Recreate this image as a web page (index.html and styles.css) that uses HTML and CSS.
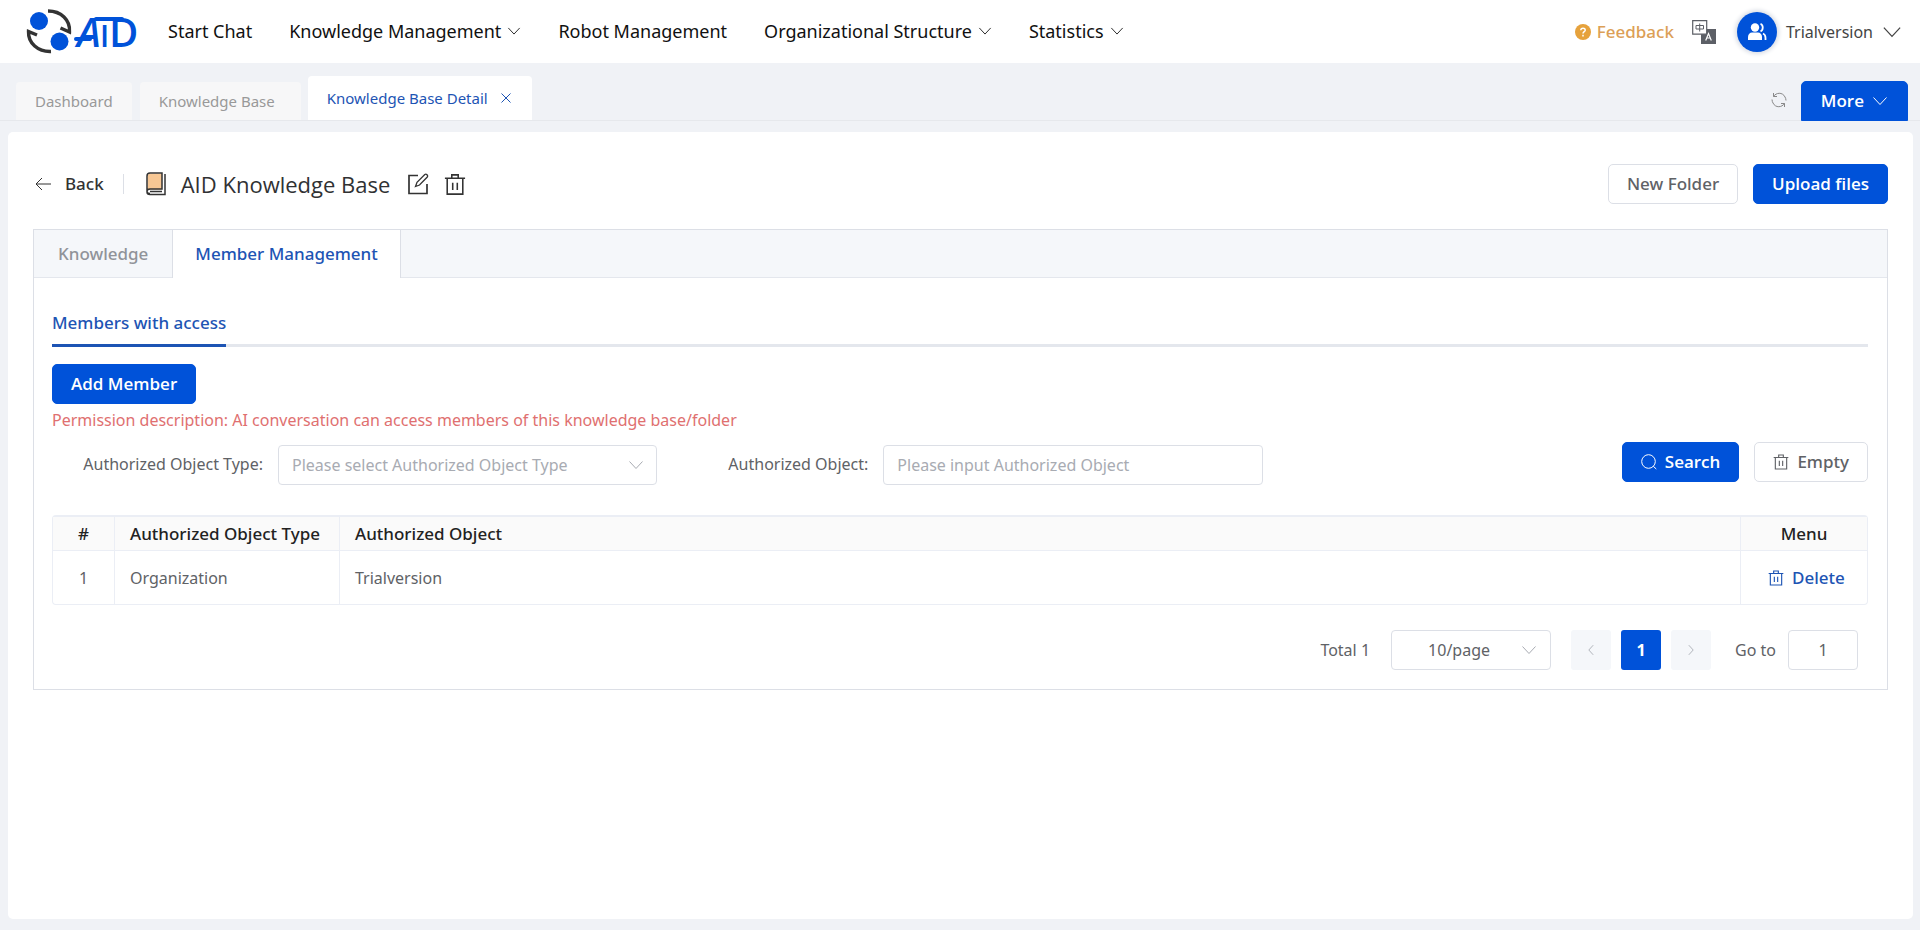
FILE: index.html
```html
<!DOCTYPE html>
<html lang="en">
<head>
<meta charset="utf-8">
<meta name="viewport" content="width=device-width, initial-scale=1">
<title>AID Knowledge Base</title>
<link rel="stylesheet" href="styles.css">
</head>
<body>
<svg class="sprite" aria-hidden="true">
  <symbol id="down" viewBox="0 0 16 16"><path d="M1.500 4.500 8 11.500l6.500-7" fill="none" stroke="currentColor"/></symbol>
  <symbol id="left" viewBox="0 0 16 16"><path d="M10.500 2.500 5.500 8l5 5.500" fill="none" stroke="currentColor"/></symbol>
  <symbol id="right" viewBox="0 0 16 16"><path d="M5.500 2.500l5 5.500-5 5.500" fill="none" stroke="currentColor"/></symbol>
  <symbol id="trash" viewBox="0 0 24 24"><path d="M1 5.200h22M8.500 5V1.500h7V5M3.500 5.500v17h17v-17M9.500 10v8M14.500 10v8" fill="none" stroke="currentColor" stroke-width="1.700"/></symbol>
</svg>
<header class="header">
  <a class="logo" href="#" aria-label="AID">
    <svg width="116" height="48" viewBox="0 0 116 48">
      <circle cx="14" cy="13" r="9" fill="#0052d9"/>
      <circle cx="34.500" cy="33.500" r="9" fill="#0052d9"/>
      <g fill="none" stroke="#333" stroke-width="3.400">
        <path d="M23 3C36 3 45.500 12 44.500 24L35.500 20"/>
        <path d="M26 43.500C13 44 3 35 3.500 23.500L12 27"/>
      </g>
      <text class="logo-text" y="39"><tspan x="52" class="slant">A</tspan><tspan x="75" class="small">I</tspan><tspan x="84">D</tspan></text>
      <path d="M51 31h14M71 11h26" fill="none" stroke="#0052d9" stroke-width="4" stroke-linecap="round"/>
    </svg>
  </a>
  <nav class="nav">
    <a href="#">Start Chat</a>
    <a href="#">Knowledge Management <svg class="i14"><use href="#down"/></svg></a>
    <a href="#">Robot Management</a>
    <a href="#">Organizational Structure <svg class="i14"><use href="#down"/></svg></a>
    <a href="#">Statistics <svg class="i14"><use href="#down"/></svg></a>
  </nav>
  <div class="account">
    <a class="feedback" href="#">
      <svg class="i16" viewBox="0 0 16 16"><circle cx="8" cy="8" r="8" fill="#e6a23c"/><path d="M5.800 6.300C5.800 3.400 10.300 3.500 10.200 6.200 10.200 7.700 8 7.700 8 9.500M8 10.800v1.700" fill="none" stroke="#fff" stroke-width="1.500"/></svg>
      Feedback
    </a>
    <button class="plain" aria-label="Switch language">
      <svg width="24" height="24" viewBox="0 0 24 24"><path d="M9 9h15v15H9z" fill="#5c5f66"/><path d="M.7.700h14v13.500H.7z" fill="#fff" stroke="#5c5f66" stroke-width="1.200"/><path d="M4 5.500h7.500v3.500H4zM7.700 3.500v8" fill="none" stroke="#5c5f66"/><path d="M13.700 20.500l2.800-7 2.800 7M14.800 18h3.500" fill="none" stroke="#fff" stroke-width="1.200"/></svg>
    </button>
    <button class="plain user">
      <span class="avatar"><svg width="20" height="20" viewBox="0 0 20 20"><circle cx="8" cy="5.500" r="4.200" fill="#fff"/><path d="M1 18v-3c0-3 2-4.500 4-4.500h6c2 0 4 1.500 4 4.500v3z" fill="#fff"/><path d="M13.500 1.800c3 1 3 6.500 0 7.500M16 11.500c1.600.8 2.500 2 2.500 4.200V18" fill="none" stroke="#fff" stroke-width="1.800"/></svg></span>
      Trialversion
      <svg class="i20"><use href="#down"/></svg>
    </button>
  </div>
</header>
<div class="tabbar">
  <a class="page-tab" href="#">Dashboard</a>
  <a class="page-tab wide" href="#">Knowledge Base</a>
  <a class="page-tab current" href="#">Knowledge Base Detail
    <svg class="i14" viewBox="0 0 14 14"><path d="M2.500 2.500l9 9M11.500 2.500l-9 9" stroke="currentColor"/></svg>
  </a>
  <button class="plain refresh" aria-label="Refresh"><svg class="i16" viewBox="0 0 16 16"><path d="M2.500 1v3.500H6M2.500 4.500C5 .5 11.500-.2 14 5 14.500 6 15 7 15 8.500M13.500 15v-3.500H10M13.500 11.500C11 15.500 4.500 16.200 2 11 1.500 10 1 9 1 7.500" fill="none" stroke="currentColor"/></svg></button>
  <button class="btn primary more">More <svg class="i16"><use href="#down"/></svg></button>
</div>
<main class="page">
  <div class="titlebar">
    <button class="plain back"><svg class="i16" viewBox="0 0 16 16"><path d="M7 2 1 8l6 6M1 8h15" fill="none" stroke="currentColor"/></svg>Back</button>
    <span class="divider"></span>
    <svg width="20" height="24" viewBox="0 0 20 24"><path d="M3.500 1.500H16v16H5L1.500 18V3.500z" fill="#f7c794"/><path d="M19 2v20.500H4C2 22.500 1 21.500 1 20V4C1 2 2 1 4 1h12v16H4c-4 0-4 4.500 0 4.500M4 19.500h12" fill="none" stroke="#333" stroke-width="1.500"/></svg>
    <h1>AID Knowledge Base</h1>
    <button class="plain" aria-label="Rename"><svg width="22" height="22" viewBox="0 0 22 22"><path d="M11 2.500H2v18h18V11" fill="none" stroke="#333" stroke-width="1.700"/><path d="M8.500 13.500 10 9.300 17.800 1.500c1.500-1 3.500 1 2.500 2.500L12.500 12z" fill="#fff" stroke="#333" stroke-width="1.300"/></svg></button>
    <button class="plain" aria-label="Delete knowledge base"><svg width="22" height="23"><use href="#trash"/></svg></button>
    <div class="actions">
      <button class="btn">New Folder</button>
      <button class="btn primary">Upload files</button>
    </div>
  </div>
  <section class="box">
    <div class="box-tabs">
      <button class="box-tab">Knowledge</button>
      <button class="box-tab selected">Member Management</button>
    </div>
    <div class="box-body">
      <div class="subtabs"><button class="subtab">Members with access</button></div>
      <button class="btn primary">Add Member</button>
      <p class="note">Permission description: AI conversation can access members of this knowledge base/folder</p>
      <form class="filters">
        <div class="field">
          <label for="type">Authorized Object Type:</label>
          <span class="select"><select id="type"><option>Please select Authorized Object Type</option></select><svg class="i16"><use href="#down"/></svg></span>
        </div>
        <div class="field">
          <label for="object">Authorized Object:</label>
          <input id="object" type="text" placeholder="Please input Authorized Object">
        </div>
        <div class="buttons">
          <button class="btn primary" type="button"><svg class="i16" viewBox="0 0 16 16"><circle cx="7.500" cy="7.500" r="6.800" fill="none" stroke="currentColor"/><path d="M12.300 12.300l3 2.700" stroke="currentColor"/></svg>Search</button>
          <button class="btn" type="reset"><svg class="i16"><use href="#trash"/></svg>Empty</button>
        </div>
      </form>
      <table class="members">
        <thead><tr><th class="num">#</th><th class="type">Authorized Object Type</th><th>Authorized Object</th><th class="menu">Menu</th></tr></thead>
        <tbody><tr><td class="num">1</td><td>Organization</td><td>Trialversion</td><td class="menu"><button class="plain delete"><svg class="i16"><use href="#trash"/></svg>Delete</button></td></tr></tbody>
      </table>
      <div class="pagination">
        <span>Total 1</span>
        <span class="select size"><select aria-label="Page size"><option>10/page</option></select><svg class="i16"><use href="#down"/></svg></span>
        <div class="pager">
          <button aria-label="Previous page" disabled><svg class="i14"><use href="#left"/></svg></button>
          <button class="active">1</button>
          <button aria-label="Next page" disabled><svg class="i14"><use href="#right"/></svg></button>
        </div>
        <div class="jump"><label for="goto">Go to</label><input id="goto" type="text" value="1"></div>
      </div>
    </div>
  </section>
</main>
</body>
</html>
```
FILE: styles.css
```css
* { box-sizing: border-box; }
body {
  margin: 0;
  min-height: 100vh;
  display: flex;
  flex-direction: column;
  background: #f0f2f6;
  color: #606266;
  font: 16px/24px "Noto Sans", "Open Sans", sans-serif;
}
button, input, select { font: inherit; color: inherit; }
button { cursor: pointer; }
a { color: inherit; text-decoration: none; }
svg { flex: none; display: block; }
.sprite { position: absolute; width: 0; height: 0; }
.i14 { width: 14px; height: 14px; }
.i16 { width: 16px; height: 16px; }
.i20 { width: 20px; height: 20px; }
.plain { padding: 0; border: 0; background: none; display: flex; align-items: center; }

.header {
  height: 63px;
  padding: 0 18px 0 25px;
  display: flex;
  align-items: center;
  background: #fff;
}
.logo { width: 116px; margin-right: 27px; }
.logo svg { overflow: visible; }
.logo-text { font: 600 40px/48px "Open Sans", sans-serif; fill: #0052d9; }
.logo-text .slant { font-style: italic; }
.logo-text .small { font-size: 30px; }
.nav { padding-bottom: 2px; display: flex; gap: 37px; color: #111; font-size: 18px; }
.nav a { display: flex; align-items: center; gap: 6px; white-space: nowrap; }
.account { margin-left: auto; display: flex; align-items: center; gap: 18px; }
.feedback { display: flex; align-items: center; gap: 6px; color: #dc9f57; font-size: 17px; font-weight: 500; }
.user { gap: 9px; color: #444; margin-left: 3px; }
.avatar {
  width: 40px;
  height: 40px;
  border-radius: 50%;
  display: grid;
  place-items: center;
  background: #0052d9;
  box-shadow: 0 0 4px 2px #d9dde5;
}

.tabbar {
  height: 58px;
  padding: 0 12px 0 16px;
  display: flex;
  align-items: flex-end;
  border-bottom: 1px solid #e6e8ec;
}
.page-tab {
  height: 38px;
  padding: 0 19px;
  margin-right: 8px;
  display: flex;
  align-items: center;
  border-radius: 4px 4px 0 0;
  background: #f7f7f8;
  color: #999;
  font-size: 15px;
}
.page-tab.wide { padding-right: 26px; margin-right: 7px; }
.page-tab.current { height: 44px; background: #fff; color: #1d54b4; gap: 11px; }
.refresh { margin: 0 14px 12px auto; color: #888; }

.btn {
  height: 40px;
  padding: 0 18px;
  display: inline-flex;
  align-items: center;
  justify-content: center;
  gap: 8px;
  border: 1px solid #dcdfe6;
  border-radius: 5px;
  background: #fff;
  color: #606266;
  font-size: 17px;
  font-weight: 500;
  white-space: nowrap;
}
.btn.primary { border-color: #0052d9; background: #0052d9; color: #fff; font-family: "Open Sans", sans-serif; font-weight: 600; }
.btn.more { padding: 0 19px; border-radius: 5px 5px 0 0; margin-bottom: -1px; }

.page {
  flex: 1;
  margin: 11px 7px 11px 8px;
  padding: 32px 25px;
  border-radius: 5px;
  background: #fff;
}
.titlebar { display: flex; align-items: center; margin-bottom: 25px; color: #333; }
.back { margin-left: 2px; gap: 14px; font-size: 17px; font-weight: 500; }
.divider { width: 1px; height: 20px; margin: 0 22px 0 19px; background: #dcdfe6; }
h1 {
  margin: 0 17px 0 15px;
  font: 400 22px/28px "Open Sans", "Noto Sans", sans-serif;
  color: #303133;
}
.titlebar .plain + .plain { margin-left: 15px; }
.actions { margin-left: auto; display: flex; gap: 15px; }

.box { border: 1px solid #dcdfe6; }
.box-tabs { height: 48px; display: flex; background: #f5f7fa; border-bottom: 1px solid #e4e7ed; }
.box-tab {
  height: 48px;
  padding: 0 24px;
  border: 0;
  background: none;
  color: #909399;
  font-size: 17px;
  font-weight: 500;
}
.box-tab.selected {
  padding: 0 22px;
  border: solid #dcdfe6;
  border-width: 0 1px;
  background: #fff;
  color: #1d54b4;
}
.box-body { padding: 18px 19px 18px 18px; }
.subtabs { margin: 5px 0 17px; display: flex; border-bottom: 3px solid #e4e7ed; }
.subtab {
  height: 46px;
  margin-bottom: -3px;
  padding: 0;
  border: 0;
  border-bottom: 3px solid #1d54b4;
  background: none;
  color: #1d54b4;
  font-size: 17px;
  font-weight: 500;
}
.note { margin: 4px 0 10px; color: #e07070; }
.filters { display: grid; grid-template-columns: repeat(3, 1fr); margin-bottom: 30px; }
.field { display: flex; align-items: center; padding-top: 3px; }
.field label { flex: none; width: 226px; padding: 0 15px 2px 0; text-align: right; }
.select { position: relative; flex: 1; display: flex; }
.select svg { position: absolute; right: 13px; top: 12px; color: #a8abb2; pointer-events: none; }
select, input {
  width: 100%;
  min-width: 0;
  height: 40px;
  padding: 0 13px;
  border: 1px solid #dcdfe6;
  border-radius: 4px;
  background: #fff;
  appearance: none;
}
.field select, input::placeholder { color: #a8abb2; }
.buttons { display: flex; justify-content: flex-end; align-items: flex-start; gap: 15px; }

.members {
  width: 100%;
  border: 1px solid #ebeef5;
  border-top-width: 2px;
  border-radius: 4px;
  border-spacing: 0;
  table-layout: fixed;
}
.members th, .members td {
  padding: 0 15px;
  text-align: left;
  border-right: 1px solid #ebeef5;
}
.members th { height: 34px; background: #fafafa; border-bottom: 1px solid #ebeef5; color: #222; font-size: 17px; font-weight: 500; }
.members td { height: 53px; }
.members .num { width: 62px; text-align: center; }
.members .type { width: 225px; }
.members .menu { width: 126px; text-align: center; border-right: 0; }
.delete { gap: 8px; margin-left: 12px; color: #1d54b4; font-size: 17px; font-weight: 500; }

.pagination { display: flex; justify-content: flex-end; align-items: center; margin: 25px 10px 1px; }
.size { flex: none; width: 160px; margin: 0 20px 0 21px; }
.size select { padding: 0 42px 0 18px; text-align: center; text-align-last: center; }
.size svg { right: 14px; }
.pager { display: flex; gap: 10px; }
.pager button {
  width: 40px;
  height: 40px;
  padding: 0;
  display: grid;
  place-items: center;
  border: 0;
  border-radius: 3px;
  background: #f5f7fa;
  color: #a8abb2;
}
.pager .active { background: #0052d9; color: #fff; font-weight: 700; }
.jump { display: flex; align-items: center; gap: 12px; margin-left: 24px; white-space: nowrap; }
.jump input { width: 70px; text-align: center; }
```
